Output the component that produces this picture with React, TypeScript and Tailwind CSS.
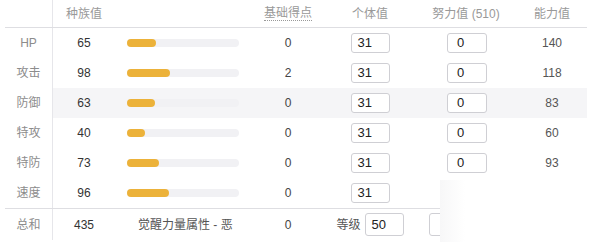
import React from 'react';

type Stat = { label: string; base: number; pts: number; iv: number; ev?: number; value?: number; hover?: boolean };

const STATS: Stat[] = [
  { label: 'HP', base: 65, pts: 0, iv: 31, ev: 0, value: 140 },
  { label: '攻击', base: 98, pts: 2, iv: 31, ev: 0, value: 118 },
  { label: '防御', base: 63, pts: 0, iv: 31, ev: 0, value: 83, hover: true },
  { label: '特攻', base: 40, pts: 0, iv: 31, ev: 0, value: 60 },
  { label: '特防', base: 73, pts: 0, iv: 31, ev: 0, value: 93 },
  { label: '速度', base: 96, pts: 0, iv: 31 },
];

const font = { fontFamily: '"Liberation Sans", "Noto Sans CJK SC", sans-serif' };

function NumBox({ value, className = '' }: { value: number | string; className?: string }) {
  return (
    <div
      className={`h-[20px] w-[39px] rounded-[3px] border border-[#cfcfd4] bg-white pl-[6px] text-[13px] leading-[18px] text-[#222] ${className}`}
    >
      {value}
    </div>
  );
}

export default function App() {
  return (
    <div className="relative h-[242px] w-[600px] overflow-hidden bg-white" style={font}>
      <div className="ml-[5px] w-[582px]">
        {/* header */}
        <div className="flex h-[28px] items-center border-b border-[#dedee2] text-[12px] text-[#999]">
          <div className="h-full w-[48px] border-r border-[#e6e6ea]" />
          <div className="w-[62px] text-center">种族值</div>
          <div className="w-[147px]" />
          <div className="flex w-[52px] justify-center">
            <span className="border-b border-dotted border-[#999] leading-[14px]">基础得点</span>
          </div>
          <div className="w-[112px] text-center">个体值</div>
          <div className="w-[80px] text-center">努力值 (510)</div>
          <div className="w-[81px] pl-[11px] text-center">能力值</div>
        </div>

        {/* stat rows */}
        {STATS.map((s) => (
          <div
            key={s.label}
            className={`flex h-[30px] items-center text-[12px] ${s.hover ? 'bg-[#f5f5f7]' : ''}`}
          >
            <div className="flex h-full w-[48px] items-center justify-center border-r border-[#e6e6ea] bg-white text-[#8c8c8c]">
              {s.label}
            </div>
            <div className="w-[62px] text-center text-[#333]">{s.base}</div>
            <div className="w-[147px] pl-[12px]">
              <div className="h-[8px] w-[112px] rounded-full bg-[#f1f1f4]">
                <div
                  className="h-full rounded-full bg-[#ecb23a]"
                  style={{ width: `${Math.round((s.base / 255) * 112)}px` }}
                />
              </div>
            </div>
            <div className="w-[52px] text-center text-[#444]">{s.pts}</div>
            <div className="flex w-[112px] justify-center">
              <NumBox value={s.iv} />
            </div>
            <div className="flex w-[80px] justify-center">
              {s.ev !== undefined && <NumBox value={s.ev} className="ml-[2px] w-[40px] pl-[9px]" />}
            </div>
            <div className="w-[81px] pl-[11px] text-center text-[#555]">{s.value ?? ''}</div>
          </div>
        ))}

        {/* total row */}
        <div className="flex h-[32px] items-center border-t border-[#dedee2] text-[12px]">
          <div className="flex h-full w-[48px] items-center justify-center border-r border-[#e6e6ea] text-[#8c8c8c]">
            总和
          </div>
          <div className="w-[62px] text-center text-[#333]">435</div>
          <div className="w-[147px] pl-[23px] text-[#555]">觉醒力量属性 - 恶</div>
          <div className="w-[52px] text-center text-[#444]">0</div>
          <div className="flex w-[112px] items-center justify-center gap-[4px]">
            <span className="text-[#555]">等级</span>
            <NumBox value={50} className="h-[23px] leading-[21px]" />
          </div>
          <div className="w-[80px] pl-[3px]">
            <div className="h-[23px] w-[60px] rounded-[3px] border border-[#cfcfd4]" />
          </div>
        </div>
      </div>

      {/* white patch over the bottom right corner */}
      <div className="absolute bottom-0 left-[440px] right-0 top-[180px] bg-gradient-to-r from-[#f7f7f8] via-white via-[25px] to-white" />
    </div>
  );
}
